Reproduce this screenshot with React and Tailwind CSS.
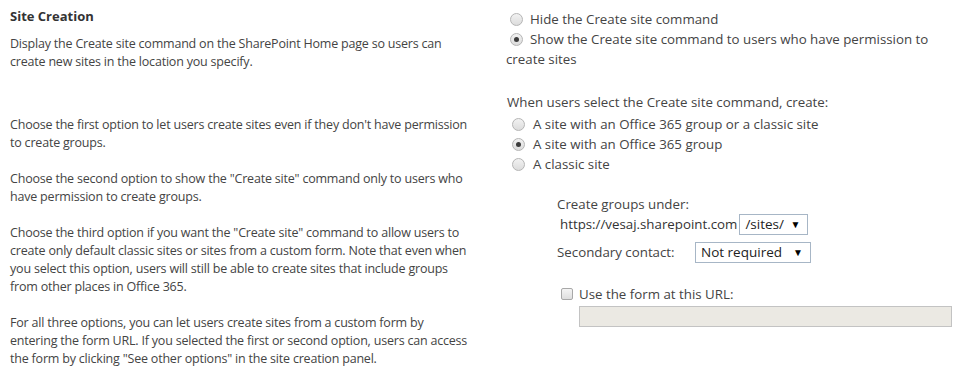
import React from 'react';

function Radio({ checked }) {
  return (
    <span className="relative inline-flex items-center justify-center w-[13px] h-[13px] rounded-full border border-[#b5b5b5] bg-gradient-to-b from-[#f2f2f2] to-[#dcdcdc] shrink-0">
      {checked && <span className="w-[5px] h-[5px] rounded-full bg-[#3c3c3c]" />}
    </span>
  );
}

function Select({ value, width }) {
  return (
    <div className={`flex items-center justify-between h-[21px] border border-[#a7b6c6] bg-white pl-[5px] pr-[7px] text-[13.5px] text-[#222] ${width}`}>
      <span>{value}</span>
      <span className="text-[10px] text-black">▼</span>
    </div>
  );
}

export default function App() {
  return (
    <div className="flex w-[962px] h-[381px] overflow-hidden bg-white text-[12.5px] tracking-[-0.2px] text-[#444] font-['Segoe_UI','Open_Sans',sans-serif]">
      {/* left: description */}
      <div className="w-[506px] pl-[10px] pt-[7px] leading-[18px] whitespace-nowrap">
        <h3 className="font-bold text-[13px] tracking-normal text-[#333] mb-[10px]">Site Creation</h3>
        <p>
          Display the Create site command on the SharePoint Home page so users can<br />
          create new sites in the location you specify.
        </p>
        <p className="mt-[45px]">
          Choose the first option to let users create sites even if they don't have permission<br />
          to create groups.
        </p>
        <p className="mt-[18px]">
          Choose the second option to show the "Create site" command only to users who<br />
          have permission to create groups.
        </p>
        <p className="mt-[18px]">
          Choose the third option if you want the "Create site" command to allow users to<br />
          create only default classic sites or sites from a custom form. Note that even when<br />
          you select this option, users will still be able to create sites that include groups<br />
          from other places in Office 365.
        </p>
        <p className="mt-[18px]">
          For all three options, you can let users create sites from a custom form by<br />
          entering the form URL. If you selected the first or second option, users can access<br />
          the form by clicking "See other options" in the site creation panel.
        </p>
      </div>

      {/* right: settings */}
      <div className="flex-1 pt-[9px] leading-[20px] text-[13.3px] tracking-normal">
        <label className="flex items-center gap-[7px] pl-[4px]">
          <Radio />
          <span>Hide the Create site command</span>
        </label>
        <label className="block">
          <span className="inline-flex align-middle pl-[4px] pr-[7px] -mt-[2px]">
            <Radio checked />
          </span>
          Show the Create site command to users who have permission to<br />create sites
        </label>

        <div className="mt-[23px] pl-[1px]">When users select the Create site command, create:</div>
        <div className="pl-[6px] mt-[2px]">
          <label className="flex items-center gap-[8px]">
            <Radio />
            <span>A site with an Office 365 group or a classic site</span>
          </label>
          <label className="flex items-center gap-[8px]">
            <Radio checked />
            <span>A site with an Office 365 group</span>
          </label>
          <label className="flex items-center gap-[8px]">
            <Radio />
            <span>A classic site</span>
          </label>
        </div>

        <div className="pl-[51px] mt-[20px]">
          <div>Create groups under:</div>
          <div className="flex items-center h-[22px] -mt-[1px]">
            <span className="pl-[3px] pr-[2px] text-[#333]">https://vesaj.sharepoint.com</span>
            <Select value="/sites/" width="w-[69px]" />
          </div>
          <div className="flex items-center h-[34px]">
            <span className="w-[138px]">Secondary contact:</span>
            <Select value="Not required" width="w-[116px]" />
          </div>
          <label className="flex items-center gap-[6px] mt-[15px] pl-[4px]">
            <span className="w-[12px] h-[12px] rounded-[2px] border border-[#a8a8a8] bg-gradient-to-b from-[#f4f4f4] to-[#dedede]" />
            <span>Use the form at this URL:</span>
          </label>
          <div className="ml-[22px] mt-[2px] w-[373px] h-[21px] border border-[#c3c3c3] bg-[#ebe9e3]" />
        </div>
      </div>
    </div>
  );
}
